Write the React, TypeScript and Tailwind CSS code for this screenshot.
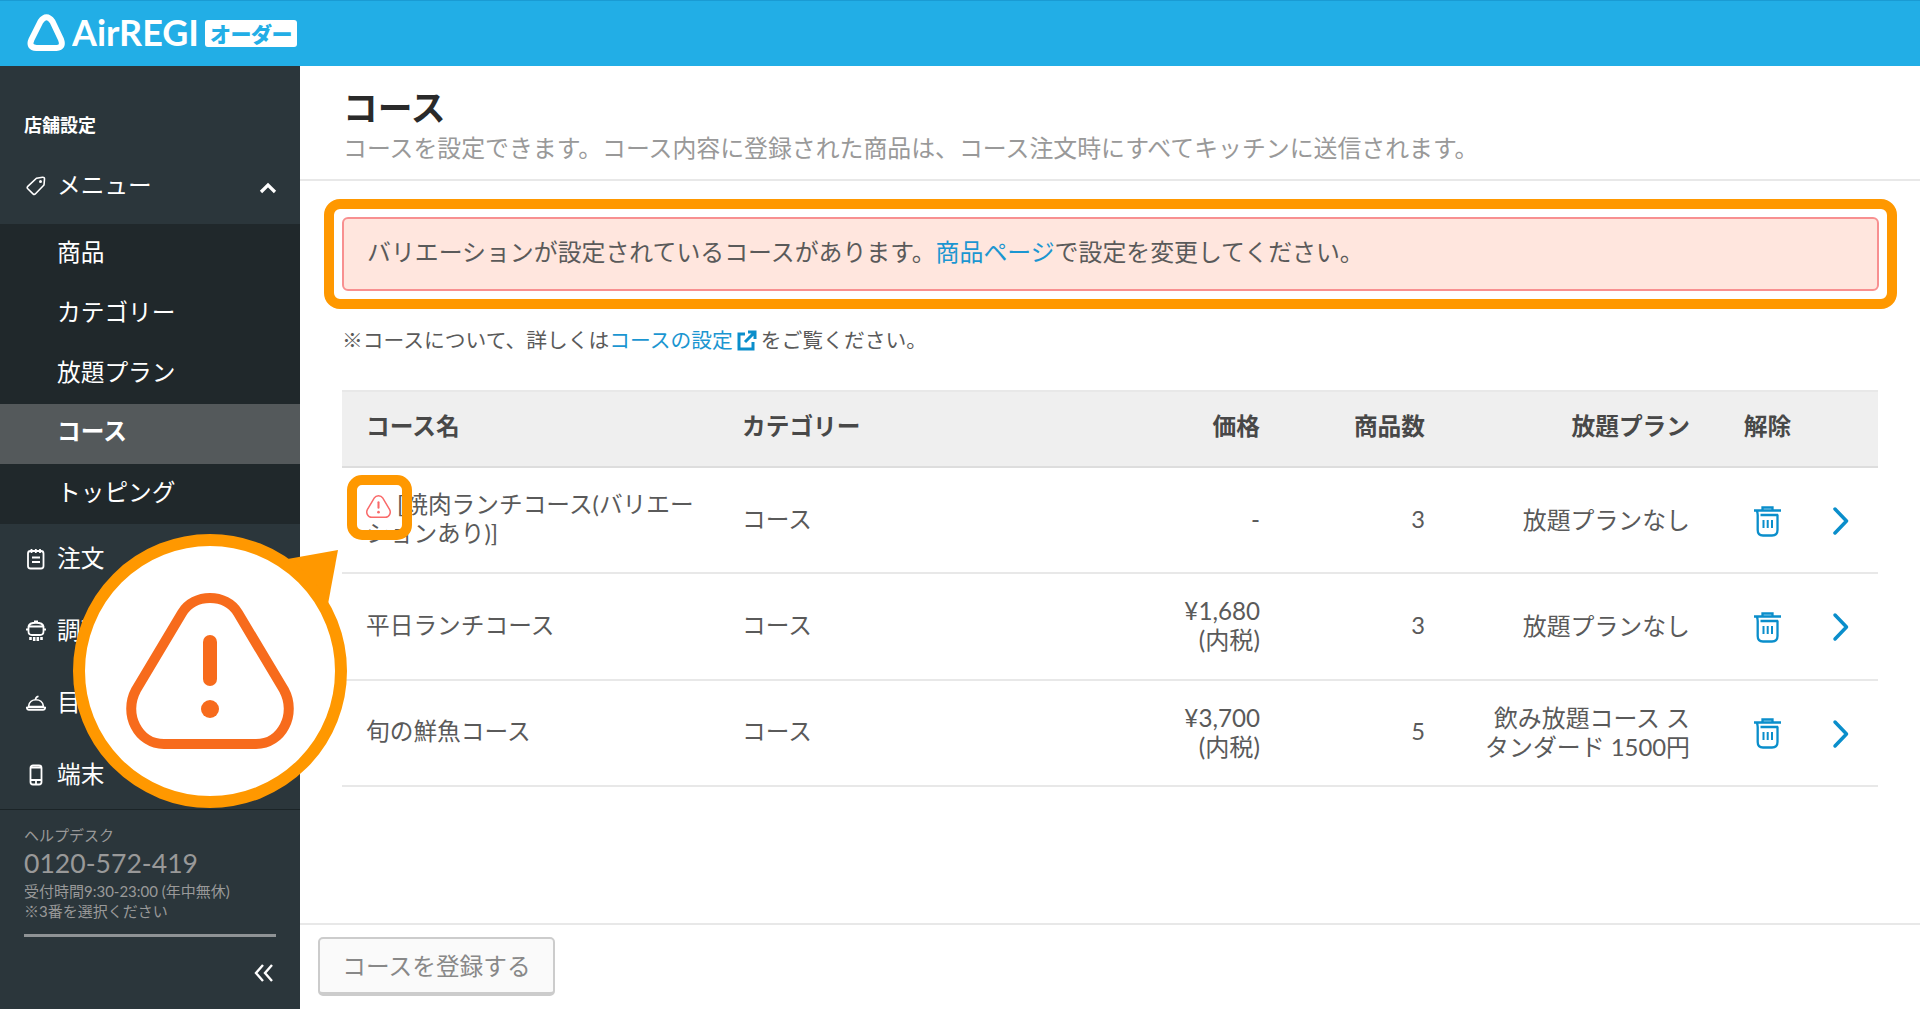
import React from "react";

const SUB_ITEMS = ["商品", "カテゴリー", "放題プラン", "コース", "トッピング"];

interface Course {
  name: string;
  warning?: boolean;
  price: string;
  count: number;
  plan: string;
}

const COURSES: Course[] = [
  {
    name: "[焼肉ランチコース(バリエーションあり)]",
    warning: true,
    price: "-",
    count: 3,
    plan: "放題プランなし",
  },
  { name: "平日ランチコース", price: "¥1,680", count: 3, plan: "放題プランなし" },
  {
    name: "旬の鮮魚コース",
    price: "¥3,700",
    count: 5,
    plan: "飲み放題コース スタンダード 1500円",
  },
];

const GRID =
  "grid grid-cols-[376px_361px_181px_165px_265px_142px_46px] items-center";

const WarningIcon = ({ className }: { className: string }) => (
  <svg viewBox="0 0 168 156" fill="none" className={className}>
    <path
      d="M56 20C68 0 100 0 112 20L158 97C171 121 156 151 130 151H38C12 151 -3 121 10 97Z"
      stroke="currentColor"
      strokeWidth="10"
    />
    <path d="M84 49V86" stroke="currentColor" strokeWidth="14" strokeLinecap="round" />
    <circle cx="84" cy="116" r="9" fill="currentColor" />
  </svg>
);

const TagIcon = () => (
  <svg viewBox="0 0 20 20" className="size-5" fill="none" stroke="currentColor" strokeWidth="1.6">
    <path d="M10.5 2.2L16.5 1.2Q18.6 1 18.5 3L18 9L9.5 17.8Q8.3 19 7 17.8L1.8 12.8Q.6 11.5 1.8 10.3Z" />
    <circle cx="14.5" cy="5.5" r=".7" />
  </svg>
);

const OrderIcon = () => (
  <svg viewBox="0 0 20 22" className="h-[22px] w-5" fill="none" stroke="currentColor" strokeWidth="1.8">
    <rect x="2" y="3" width="15.5" height="17.5" rx="2.5" />
    <path d="M5.5 1v4M9.8 1v4M14 1v4M6 9.5h8M6 14h8" />
  </svg>
);

const KitchenIcon = () => (
  <svg viewBox="0 0 20 22" className="h-[22px] w-5" fill="none" stroke="currentColor" strokeWidth="1.8">
    <path d="M2.5 6.5C3.5 1.500 16.500 1.500 17.500 6.500V11.500Q17.500 15 14 15H6Q2.500 15 2.500 11.500ZM2.500 6.500H17.500M0 9.500H2.500M17.500 9.500H20M8 1.500H12" />
    <path d="M4.500 17v3M8.200 17v4M11.800 17v4M15.500 17v3" strokeWidth="2.600" />
  </svg>
);

const BellIcon = () => (
  <svg viewBox="0 0 20 16" className="h-4 w-5" fill="none" stroke="currentColor" strokeWidth="1.700">
    <path d="M2.500 11.500C3.500 2.500 16.500 2.500 17.500 11.500ZM.800 12.500Q1 14.800 3 14.800H17Q19 14.800 19.200 12.500ZM9.500 4.500Q9.500 2 12.500 1.200" />
  </svg>
);

const DeviceIcon = () => (
  <svg viewBox="0 0 20 22" className="h-[22px] w-5" fill="none" stroke="currentColor" strokeWidth="1.800">
    <rect x="4.500" y="1.500" width="11" height="19" rx="2.500" />
    <path d="M5 3.500h10M5 16h10M10 16v4" />
  </svg>
);

const TrashIcon = () => (
  <svg viewBox="0 0 27 31" className="h-[31px] w-[27px]" fill="none" stroke="#0a8ecb" strokeWidth="2.300">
    <path d="M0 4.500H27M8.500 4V1.500H18.500V4M2.500 4.500Q3.700 6 3.700 9V24Q3.700 29.500 9 29.500H18Q23.500 29.500 23.500 24V8.500M6.500 9H24" />
    <path d="M9.500 14v8M13.700 14v8M18 14v8" strokeWidth="2" />
  </svg>
);

const MAIN_ITEMS = [
  { label: "注文", Icon: OrderIcon },
  { label: "調理", Icon: KitchenIcon },
  { label: "目標", Icon: BellIcon },
  { label: "端末", Icon: DeviceIcon },
];

const Header = () => (
  <header className="flex h-[66px] shrink-0 items-center border-t border-[#1a9bd3] bg-[#22aee6] pb-px pl-[26px]">
    <svg width="40" height="38" viewBox="0 0 40 38" fill="none">
      <path
        d="M14.500 7.500Q20.500 -1 26.500 7.500L35 25.500Q38 33.500 30.500 34H10.500Q2 33.500 5.500 25.500Z"
        stroke="white"
        strokeWidth="6"
      />
    </svg>
    <svg width="132" height="52" viewBox="0 0 132 52" className="ml-[6px]">
      <text
        x="0"
        y="39"
        textLength="127"
        lengthAdjust="spacingAndGlyphs"
        className="fill-white font-['Lato'] text-[36px] font-bold"
      >
        AirREGI
      </text>
    </svg>
    <span className="ml-px flex h-[27px] w-[92px] items-center justify-center rounded-[3px] bg-white text-[21px] leading-none font-black tracking-[-0.5px] text-[#22aee6]">
      オーダー
    </span>
  </header>
);

const Sidebar = () => (
  <aside className="flex w-[300px] shrink-0 flex-col bg-[#2b363b] text-white">
    <h2 className="pt-[47px] pl-6 text-[18px] leading-6 font-bold">店舗設定</h2>
    <div className="mt-[20px] flex h-[67px] items-center pr-[23px] pb-[10px] pl-[26px]">
      <TagIcon />
      <span className="ml-[11px] flex-1">メニュー</span>
      <svg width="18" height="12" viewBox="0 0 18 12" fill="none" className="mt-1">
        <path d="M2 10L9 3L16 10" stroke="white" strokeWidth="3.200" />
      </svg>
    </div>
    <ul className="bg-[#20282b]">
      {SUB_ITEMS.map((item) => (
        <li
          key={item}
          className={
            item === "コース"
              ? "h-[60px] bg-[#54595b] pl-[57px] leading-[55px] font-bold"
              : "h-[60px] pl-[57px] leading-[56px]"
          }
        >
          {item}
        </li>
      ))}
    </ul>
    {MAIN_ITEMS.map(({ label, Icon }) => (
      <div key={label} className="flex h-[72px] items-center pb-[3px] pl-[26px]">
        <Icon />
        <span className="ml-[11px]">{label}</span>
      </div>
    ))}
    <div className="-mt-[3px] border-t border-[#1b2427] px-6 pt-[15px] text-[15px] leading-5 text-[#999]">
      <p>ヘルプデスク</p>
      <p className="text-[26.600px] leading-[36px]">0120-572-419</p>
      <p>受付時間9:30-23:00 (年中無休)</p>
      <p>※3番を選択ください</p>
      <hr className="mt-[13px] border-t-[3px] border-[#8f9395]" />
      <svg width="20" height="18" viewBox="0 0 20 18" fill="none" className="mt-[27px] mr-[2px] ml-auto">
        <path d="M9 1L2 9L9 17M18 1L11 9L18 17" stroke="white" strokeWidth="2.400" />
      </svg>
    </div>
  </aside>
);

const CourseTable = () => (
  <section className="mr-[42px] ml-[42px]">
    <div className={`${GRID} h-[78px] border-t-2 border-b-2 border-t-[#e8e8e8] border-b-[#ddd] bg-[#efefef] pb-[5px] font-bold text-[#484848]`}>
      <span className="pl-6">コース名</span>
      <span className="pl-6">カテゴリー</span>
      <span className="text-right">価格</span>
      <span className="text-right">商品数</span>
      <span className="text-right">放題プラン</span>
      <span className="pl-[13px] text-center">解除</span>
      <span />
    </div>
    {COURSES.map((course) => (
      <div key={course.name} className={`${GRID} h-[106.300px] border-b-2 border-[#e8e8e8] pb-[2px] leading-[29px]`}>
        <span className="w-[358px] pl-6 break-all">
          {course.warning && (
            <WarningIcon className="mr-[6px] inline h-[25px] w-[25px] align-[-6px] text-[#f96a6a]" />
          )}
          {course.name}
        </span>
        <span className="pl-6">コース</span>
        <span className="text-right text-[24.200px]">
          {course.price}
          {course.price !== "-" && (
            <>
              <br />
              (内税)
            </>
          )}
        </span>
        <span className="text-right">{course.count}</span>
        <span className="ml-auto w-[215px] text-right text-[23.900px] break-all">{course.plan}</span>
        <span className="flex justify-center pt-1 pl-[13px]">
          <TrashIcon />
        </span>
        <svg width="18" height="30" viewBox="0 0 18 30" fill="none" className="mt-1">
          <path
            d="M3 3L14.500 15L3 27"
            stroke="#0a8ecb"
            strokeWidth="3.500"
            strokeLinecap="round"
            strokeLinejoin="round"
          />
        </svg>
      </div>
    ))}
  </section>
);

export default function App() {
  return (
    <div className="relative flex h-[1009px] w-[1920px] flex-col overflow-hidden bg-white font-['Lato','Noto_Sans_CJK_JP',sans-serif] text-[23.700px] text-[#5a5a5a]">
      <Header />
      <div className="flex flex-1">
        <Sidebar />
        <main className="flex flex-1 flex-col">
          <div className="h-[115px] border-b-2 border-[#e8e8e8] pt-[20px] pl-[43px]">
            <h1 className="text-[34.800px] leading-[44px] font-bold text-[#2a2a2a]">コース</h1>
            <p className="text-[23.880px] leading-[36px] text-[#999]">
              コースを設定できます。コース内容に登録された商品は、コース注文時にすべてキッチンに送信されます。
            </p>
          </div>
          <div className="mt-[18px] mr-[23px] ml-6 h-[110px] rounded-[16px] border-[10px] border-[#ff9800] p-2">
            <div className="h-full rounded-[6px] border-2 border-[#f89090] bg-[#ffe6de] pl-[23px] text-[23.900px] leading-[66px]">
              バリエーションが設定されているコースがあります。
              <a className="text-[#1b96d1]">商品ページ</a>で設定を変更してください。
            </div>
          </div>
          <p className="mt-[16px] mb-[35px] flex items-center pl-[42px] text-[20.770px] leading-[30px]">
            ※コースについて、詳しくは
            <a className="flex items-center text-[#1b96d1]">
              コースの設定
              <svg width="20" height="21" viewBox="0 0 20 21" fill="none" className="mx-1">
                <path d="M8 4H2V19H16V12M11 2H18V9M18 2L8 12" stroke="#0a8ecb" strokeWidth="3" />
              </svg>
            </a>
            をご覧ください。
          </p>
          <CourseTable />
          <footer className="mt-auto h-[86px] border-t-2 border-[#e8e8e8] pt-[12px] pl-[18px]">
            <button className="h-[59px] w-[237px] rounded-[5px] border-2 border-b-4 border-[#ccc] bg-[#fafafa] pt-[2px] text-[#888]">
              コースを登録する
            </button>
          </footer>
        </main>
      </div>

      {/* callout over the first row's warning icon */}
      <div className="absolute top-[475px] left-[347px] h-[65px] w-[65px] rounded-[15px] border-[10px] border-[#ff9800]" />
      <svg width="280" height="280" viewBox="0 0 280 280" className="absolute top-[532px] left-[72px]">
        <path d="M210 28L266 18L256 72Z" fill="#ff9800" />
        <circle cx="138" cy="139" r="131" fill="white" stroke="#ff9800" strokeWidth="12" />
      </svg>
      <WarningIcon className="absolute top-[593px] left-[126px] h-[156px] w-[168px] text-[#f76b1c]" />
    </div>
  );
}
